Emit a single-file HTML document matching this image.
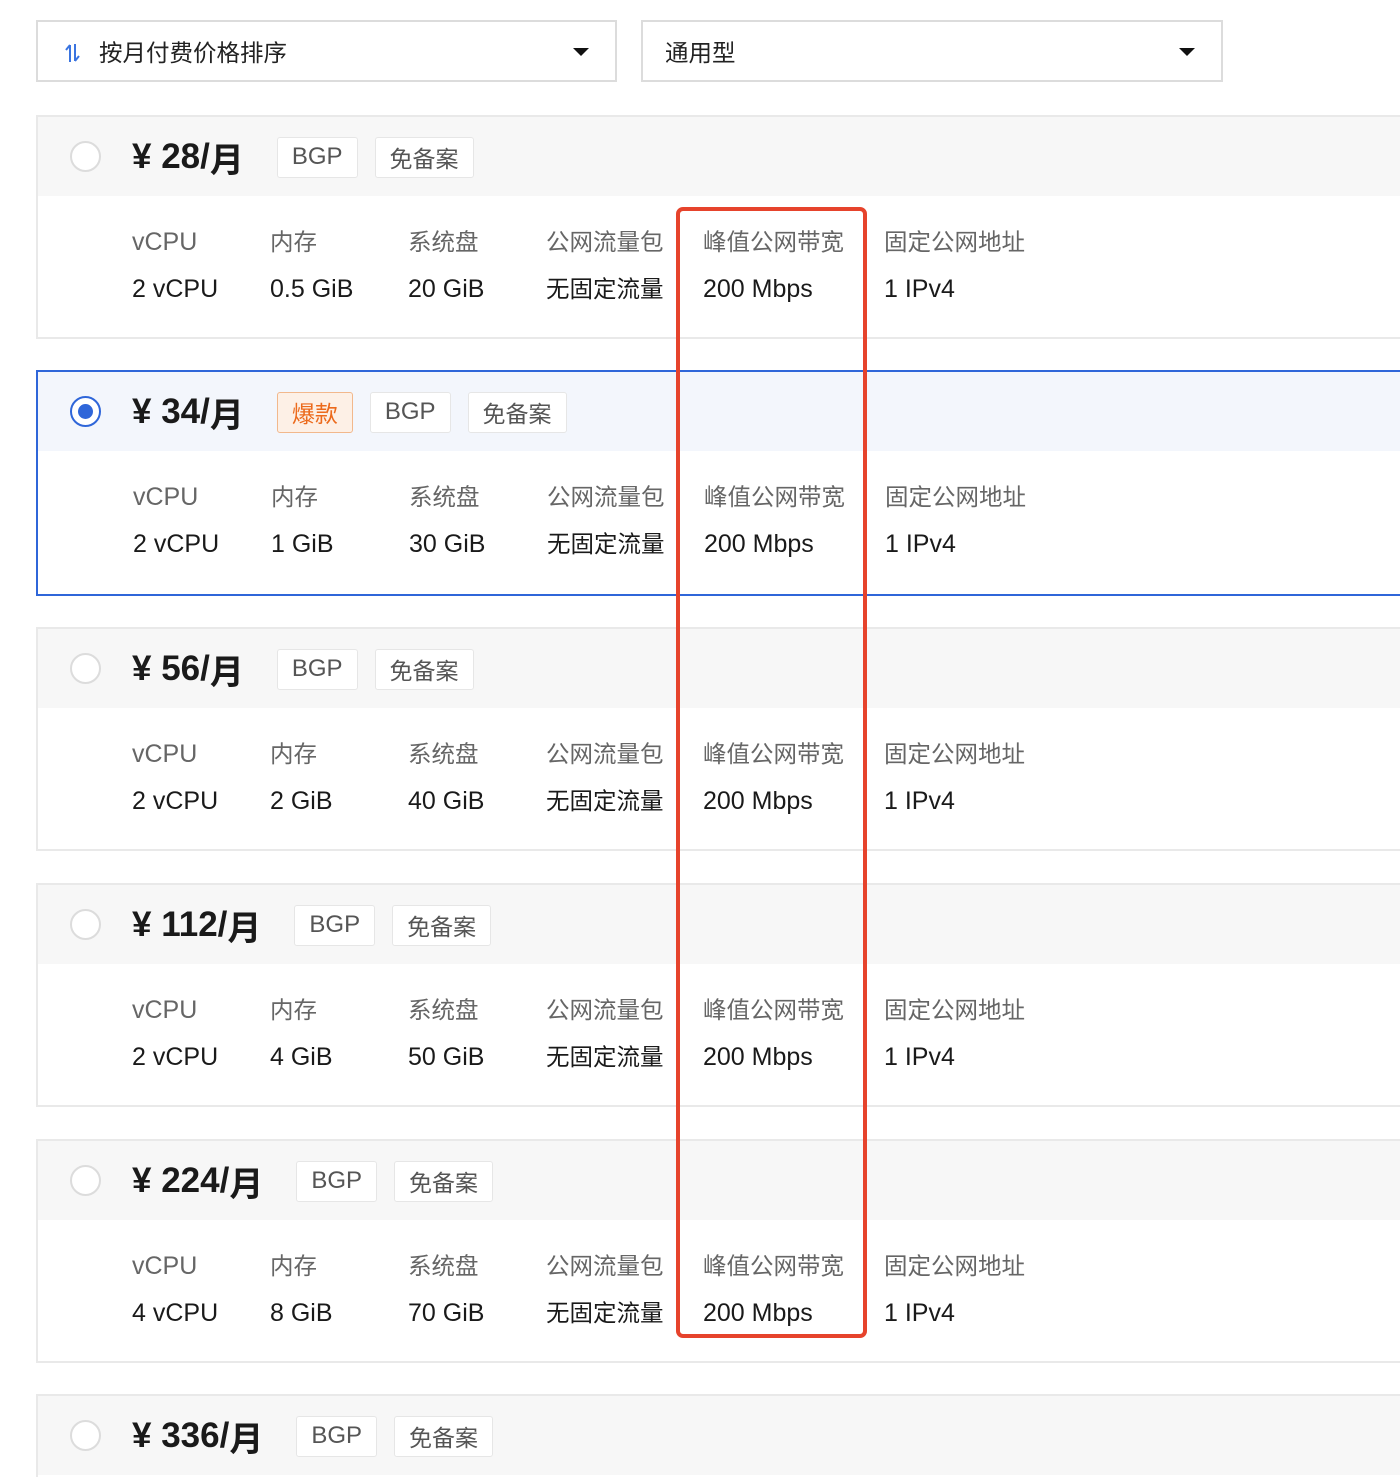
<!DOCTYPE html>
<html><head><meta charset="utf-8"><style>
*{box-sizing:border-box;margin:0;padding:0}
html,body{width:1400px;height:1477px;overflow:hidden}
body{background:#fff;font-family:"Liberation Sans","Noto Sans CJK SC",sans-serif;color:#222;position:relative}
.dd{position:absolute;top:20px;height:62px;border:2px solid #dcdcdc;background:#fff;font-size:23.5px;color:#222;display:flex;align-items:center}
.dd .tri{position:absolute;right:26px;top:26px;width:0;height:0;border-left:8px solid transparent;border-right:8px solid transparent;border-top:8px solid #111}
.card{position:absolute;left:36px;width:1400px;height:224px;border:2px solid #e9e9e9;background:#fff;overflow:hidden}
.hd{position:absolute;left:0;top:0;right:0;height:79px;background:#f7f7f7;display:flex;align-items:center}
.sel{border-color:#2f66d9}
.sel .hd{background:#f3f6fc}
.radio{position:absolute;left:32px;top:24px;width:31px;height:31px;border-radius:50%;border:2px solid #dcdcdc;background:#fff}
.sel .radio{border-color:#2f66d9}
.sel .radio::after{content:"";position:absolute;left:6px;top:6px;width:15px;height:15px;border-radius:50%;background:#2f66d9}
.price{position:absolute;left:94px;top:20px;font-size:34px;font-weight:bold;color:#1a1a1a;display:flex;align-items:center;height:40px}
.price .p{font-size:35px}
.tags{display:flex;gap:17px;margin-left:33px}
.tag{height:41px;padding:0 14px;border:1px solid #e6e6e6;border-radius:3px;background:#fff;font-size:23px;font-weight:normal;color:#555;display:flex;align-items:center}
.tag.en{font-size:24px}
.tag.hot{background:#fdf0e6;border-color:#f2b88c;color:#ec6a1c}
.col{position:absolute;font-size:23.5px;white-space:nowrap;line-height:30px}
.col.en{font-size:25px}
.lb{top:110px;color:#666}
.vl{top:157px;color:#1a1a1a}
.red{position:absolute;left:676px;top:207px;width:191px;height:1131px;border:4px solid #e6432c;border-radius:7px}
</style></head><body>
<div class="dd" style="left:36px;width:581px">
<svg style="position:absolute;left:24px;top:20px" width="20" height="22" viewBox="0 0 20 22"><path d="M8 3v17M8 3L4 8" stroke="#3a74e0" stroke-width="2" fill="none"/><path d="M13 2v17M13 19l4-5" stroke="#3a74e0" stroke-width="2" fill="none"/></svg>
<span style="position:absolute;left:61px">按月付费价格排序</span><div class="tri"></div></div>
<div class="dd" style="left:641px;width:582px"><span style="position:absolute;left:22px">通用型</span><div class="tri"></div></div>

<div class="card" style="top:115px"><div class="hd"></div><div class="radio"></div>
<div class="price"><span class="p">¥ 28/</span>月<div class="tags"><div class="tag en">BGP</div><div class="tag">免备案</div></div></div>
<div class="col lb en" style="left:94px">vCPU</div><div class="col lb" style="left:232px">内存</div><div class="col lb" style="left:370px">系统盘</div><div class="col lb" style="left:508px">公网流量包</div><div class="col lb" style="left:665px">峰值公网带宽</div><div class="col lb" style="left:846px">固定公网地址</div>
<div class="col vl en" style="left:94px">2 vCPU</div><div class="col vl en" style="left:232px">0.5 GiB</div><div class="col vl en" style="left:370px">20 GiB</div><div class="col vl" style="left:508px">无固定流量</div><div class="col vl en" style="left:665px">200 Mbps</div><div class="col vl en" style="left:846px">1 IPv4</div></div>

<div class="card sel" style="top:370px;height:226px"><div class="hd"></div><div class="radio"></div>
<div class="price"><span class="p">¥ 34/</span>月<div class="tags"><div class="tag hot">爆款</div><div class="tag en">BGP</div><div class="tag">免备案</div></div></div>
<div class="col lb en" style="left:95px">vCPU</div><div class="col lb" style="left:233px">内存</div><div class="col lb" style="left:371px">系统盘</div><div class="col lb" style="left:509px">公网流量包</div><div class="col lb" style="left:666px">峰值公网带宽</div><div class="col lb" style="left:847px">固定公网地址</div>
<div class="col vl en" style="left:95px">2 vCPU</div><div class="col vl en" style="left:233px">1 GiB</div><div class="col vl en" style="left:371px">30 GiB</div><div class="col vl" style="left:509px">无固定流量</div><div class="col vl en" style="left:666px">200 Mbps</div><div class="col vl en" style="left:847px">1 IPv4</div></div>

<div class="card" style="top:627px"><div class="hd"></div><div class="radio"></div>
<div class="price"><span class="p">¥ 56/</span>月<div class="tags"><div class="tag en">BGP</div><div class="tag">免备案</div></div></div>
<div class="col lb en" style="left:94px">vCPU</div><div class="col lb" style="left:232px">内存</div><div class="col lb" style="left:370px">系统盘</div><div class="col lb" style="left:508px">公网流量包</div><div class="col lb" style="left:665px">峰值公网带宽</div><div class="col lb" style="left:846px">固定公网地址</div>
<div class="col vl en" style="left:94px">2 vCPU</div><div class="col vl en" style="left:232px">2 GiB</div><div class="col vl en" style="left:370px">40 GiB</div><div class="col vl" style="left:508px">无固定流量</div><div class="col vl en" style="left:665px">200 Mbps</div><div class="col vl en" style="left:846px">1 IPv4</div></div>

<div class="card" style="top:883px"><div class="hd"></div><div class="radio"></div>
<div class="price"><span class="p">¥ 112/</span>月<div class="tags"><div class="tag en">BGP</div><div class="tag">免备案</div></div></div>
<div class="col lb en" style="left:94px">vCPU</div><div class="col lb" style="left:232px">内存</div><div class="col lb" style="left:370px">系统盘</div><div class="col lb" style="left:508px">公网流量包</div><div class="col lb" style="left:665px">峰值公网带宽</div><div class="col lb" style="left:846px">固定公网地址</div>
<div class="col vl en" style="left:94px">2 vCPU</div><div class="col vl en" style="left:232px">4 GiB</div><div class="col vl en" style="left:370px">50 GiB</div><div class="col vl" style="left:508px">无固定流量</div><div class="col vl en" style="left:665px">200 Mbps</div><div class="col vl en" style="left:846px">1 IPv4</div></div>

<div class="card" style="top:1139px"><div class="hd"></div><div class="radio"></div>
<div class="price"><span class="p">¥ 224/</span>月<div class="tags"><div class="tag en">BGP</div><div class="tag">免备案</div></div></div>
<div class="col lb en" style="left:94px">vCPU</div><div class="col lb" style="left:232px">内存</div><div class="col lb" style="left:370px">系统盘</div><div class="col lb" style="left:508px">公网流量包</div><div class="col lb" style="left:665px">峰值公网带宽</div><div class="col lb" style="left:846px">固定公网地址</div>
<div class="col vl en" style="left:94px">4 vCPU</div><div class="col vl en" style="left:232px">8 GiB</div><div class="col vl en" style="left:370px">70 GiB</div><div class="col vl" style="left:508px">无固定流量</div><div class="col vl en" style="left:665px">200 Mbps</div><div class="col vl en" style="left:846px">1 IPv4</div></div>

<div class="card" style="top:1394px;height:83px;border-bottom:none"><div class="hd"></div><div class="radio"></div>
<div class="price"><span class="p">¥ 336/</span>月<div class="tags"><div class="tag en">BGP</div><div class="tag">免备案</div></div></div></div>

<div class="red"></div>
</body></html>
